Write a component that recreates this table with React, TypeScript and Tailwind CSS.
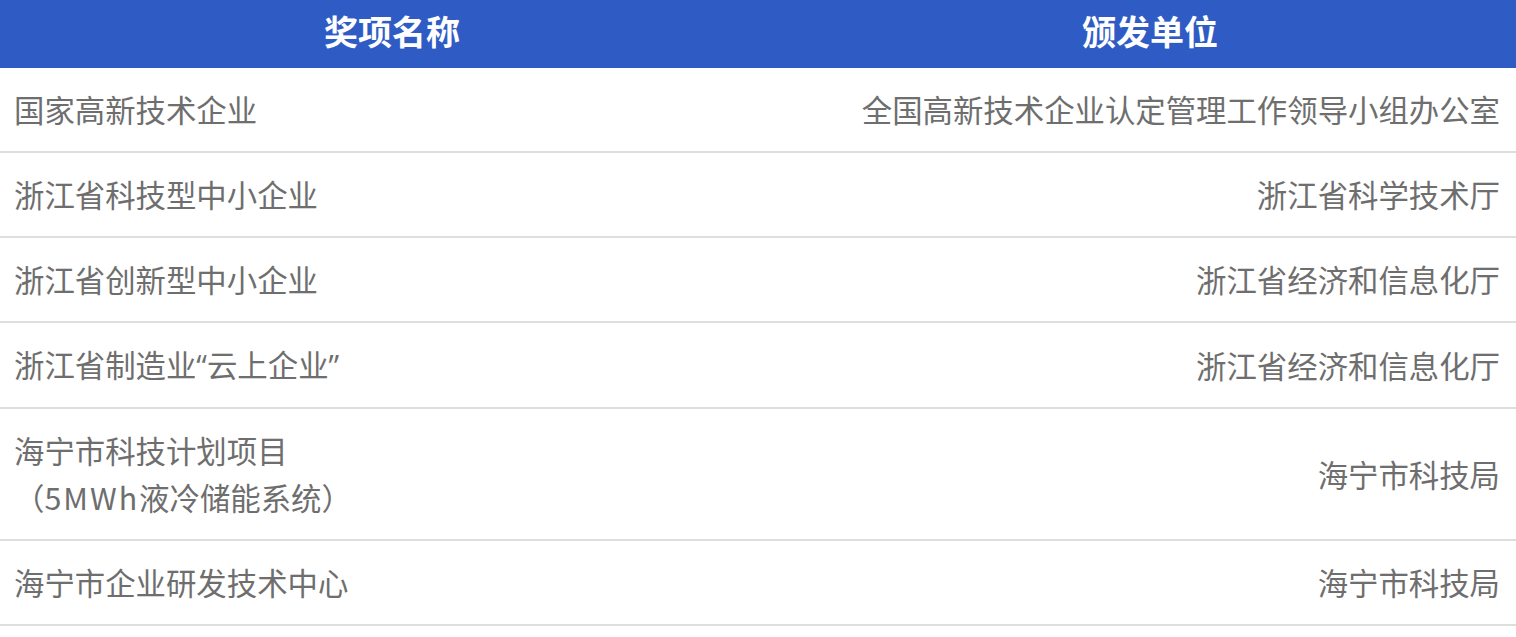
import type { ReactNode } from 'react';

const Q = ({ children }: { children: ReactNode }) => (
  <span style={{ fontFamily: '"Open Sans", sans-serif' }}>{children}</span>
);

const rows: { name: ReactNode[]; org: string }[] = [
  { name: ['国家高新技术企业'], org: '全国高新技术企业认定管理工作领导小组办公室' },
  { name: ['浙江省科技型中小企业'], org: '浙江省科学技术厅' },
  { name: ['浙江省创新型中小企业'], org: '浙江省经济和信息化厅' },
  {
    name: [
      <>
        浙江省制造业<Q>“</Q>云上企业<Q>”</Q>
      </>,
    ],
    org: '浙江省经济和信息化厅',
  },
  {
    name: [
      '海宁市科技计划项目',
      <>
        （<span className="tracking-[2px]">5MWh</span>液冷储能系统）
      </>,
    ],
    org: '海宁市科技局',
  },
  { name: ['海宁市企业研发技术中心'], org: '海宁市科技局' },
];

export default function App() {
  return (
    <div
      className="w-[1516px] bg-white"
      style={{ fontFamily: '"Noto Sans CJK SC", "Noto Sans", sans-serif' }}
    >
      {/* header */}
      <div className="grid h-[68px] grid-cols-[784px_1fr] items-center bg-[#2f5cc4] pb-[7px] text-[34px] font-bold text-white">
        <div className="text-center">奖项名称</div>
        <div className="text-center">颁发单位</div>
      </div>

      {rows.map((row, i) => (
        <div
          key={i}
          className="grid grid-cols-[784px_1fr] items-center border-b-2 border-[#dedede] py-[18px] text-[30.4px] leading-[47px] text-[#6e6e6e]"
        >
          <div className="pl-[14px]">
            {row.name.map((line, j) => (
              <div key={j}>{line}</div>
            ))}
          </div>
          <div className="pr-[16px] text-right">{row.org}</div>
        </div>
      ))}
    </div>
  );
}
